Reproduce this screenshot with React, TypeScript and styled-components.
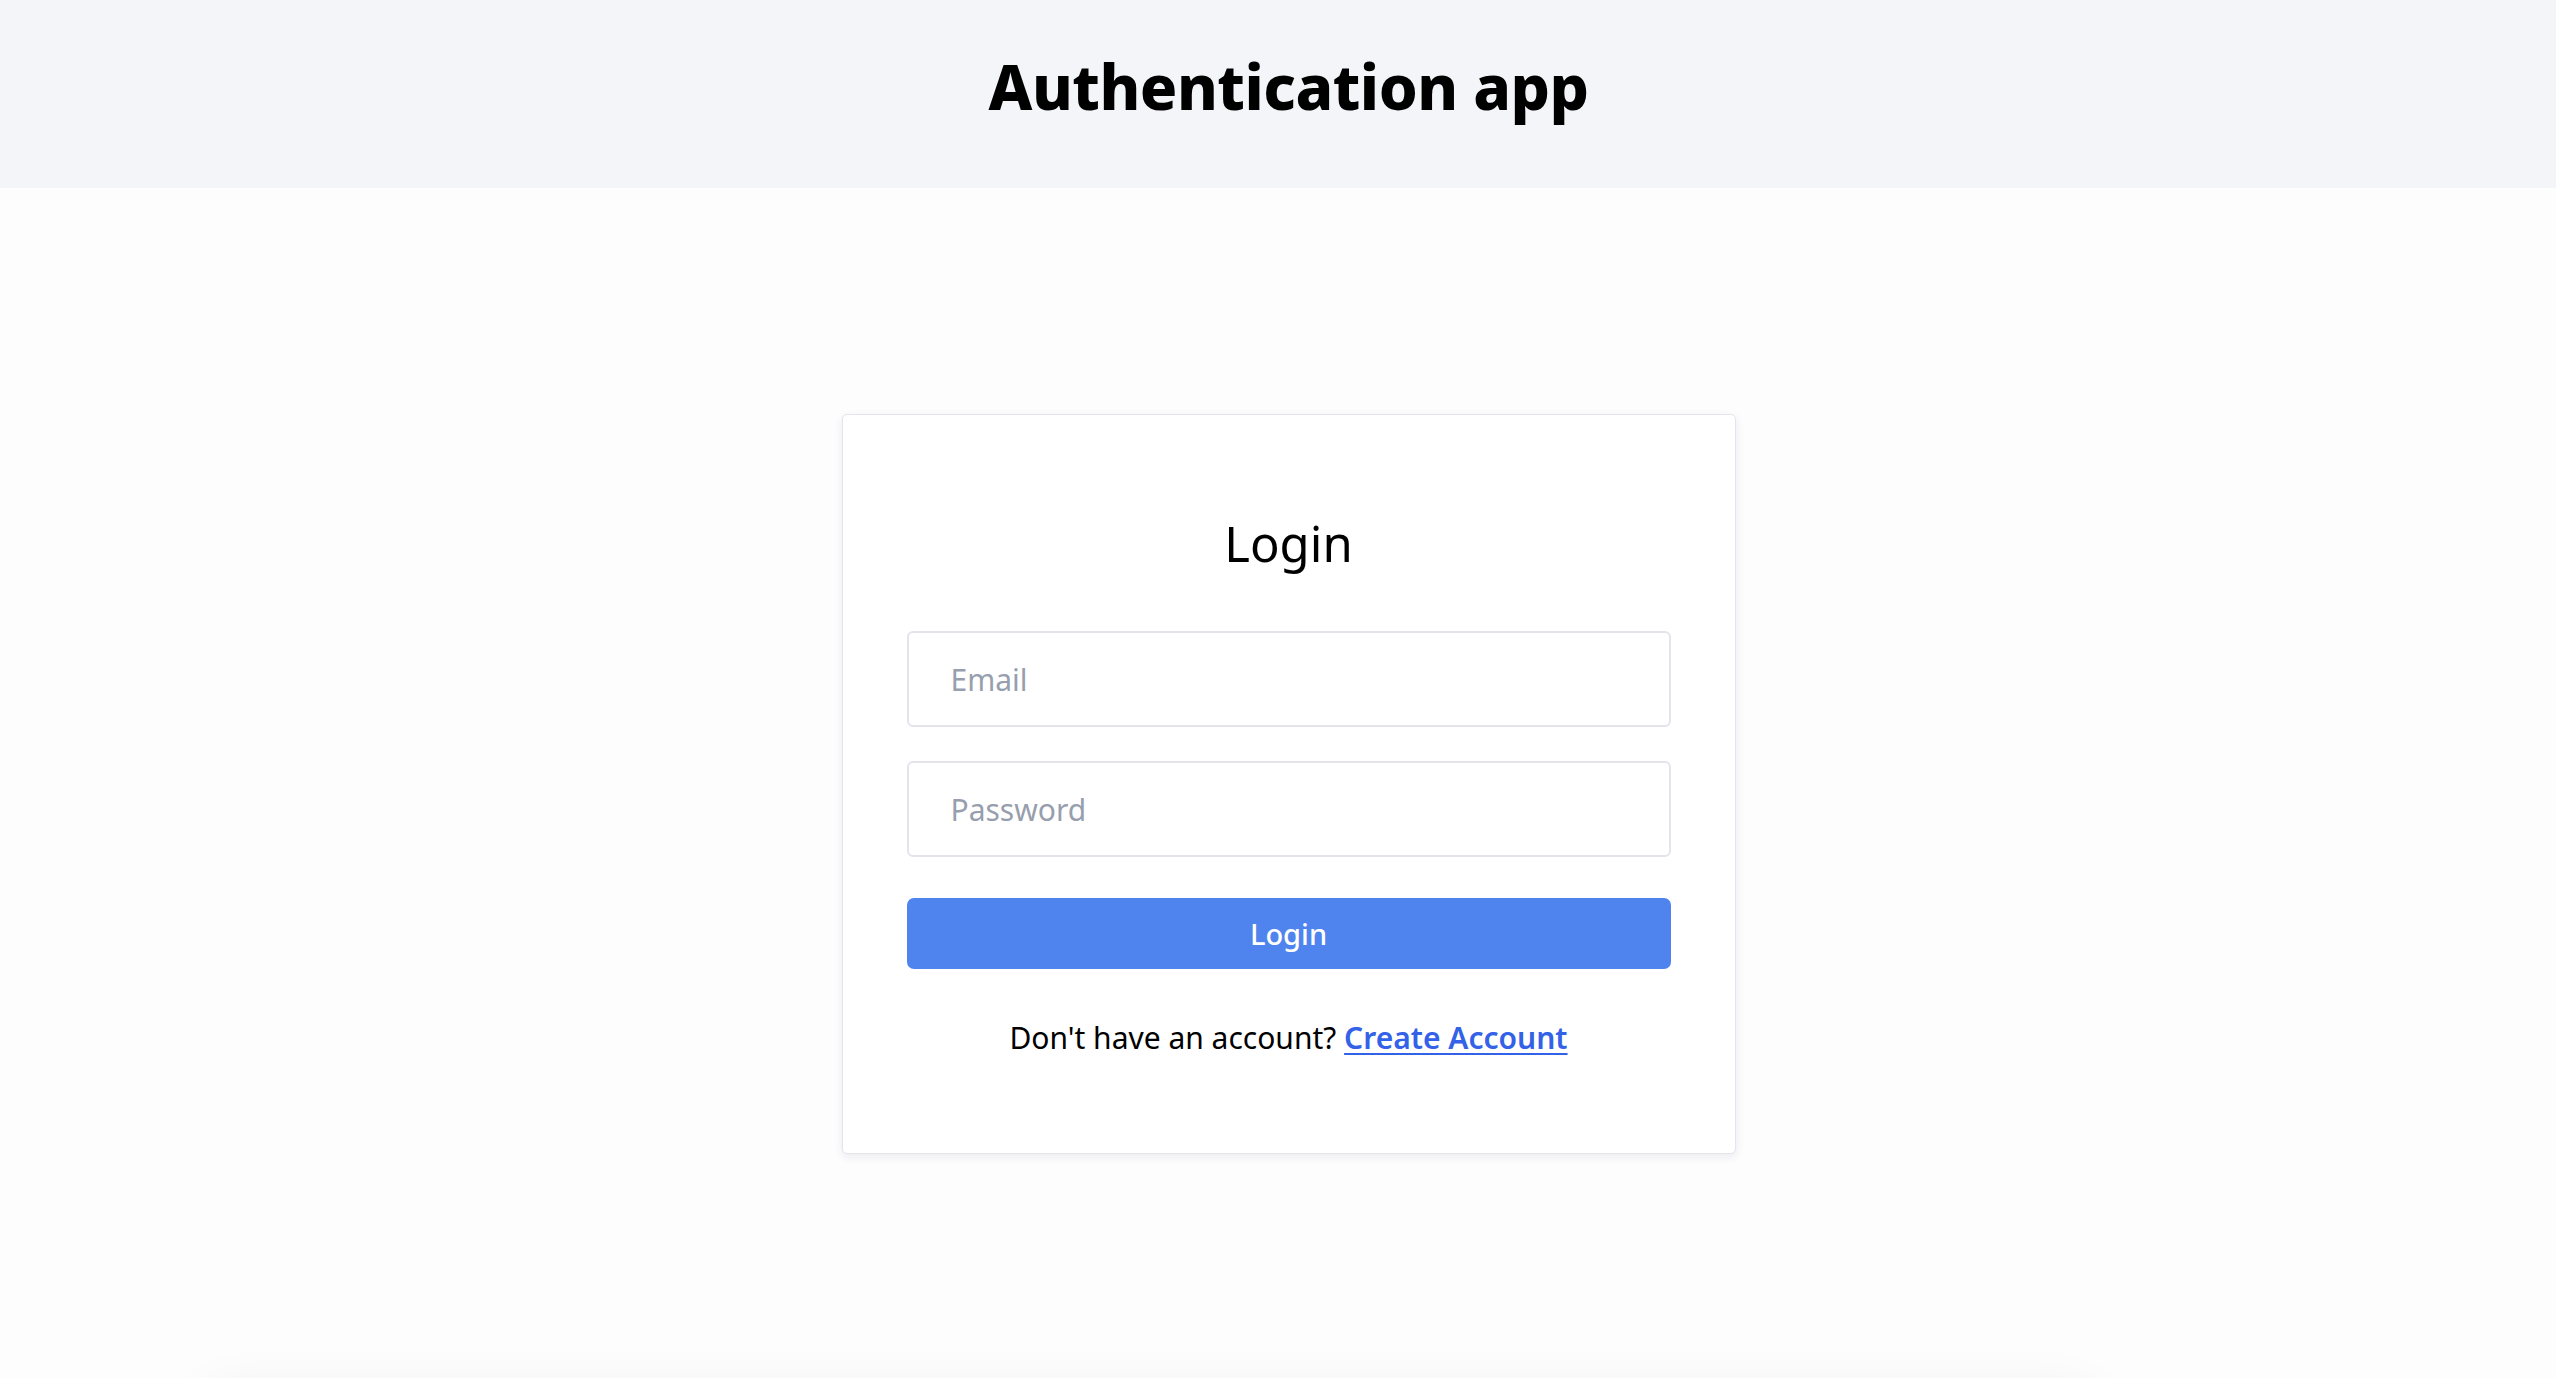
import React from "react";
import styled, { createGlobalStyle } from "styled-components";

const GlobalStyle = createGlobalStyle`
  html, body {
    margin: 0;
    padding: 0;
    background: #fdfdfe;
  }
  body {
    font-family: "Noto Sans", "Open Sans", sans-serif;
    color: #000;
    overflow: hidden;
  }
  * { box-sizing: border-box; }
`;

const Page = styled.div`
  display: flex;
  flex-direction: column;
  min-height: 100vh;
  background: #fdfdfe;
`;

const Header = styled.header`
  height: 188px;
  background: #f3f5f9;
  display: flex;
  align-items: center;
  justify-content: center;
  padding: 0 0 16px 21px;
`;

const Title = styled.h1`
  margin: 0;
  font-family: "Noto Sans", sans-serif;
  font-weight: 800;
  font-size: 62px;
  letter-spacing: -0.5px;
  color: #000;
`;

const Main = styled.main`
  display: flex;
  justify-content: center;
  padding: 226px 0 232px 21px;
`;

const Card = styled.section`
  width: 894px;
  background: #ffffff;
  border: 1px solid #e3e5ea;
  border-radius: 5px;
  box-shadow: 0 3px 10px rgba(20, 30, 60, 0.08);
  padding: 92px 64px 93px;
  display: flex;
  flex-direction: column;
  align-items: stretch;
`;

const Heading = styled.h2`
  margin: 0 0 52px;
  text-align: center;
  font-weight: 400;
  font-size: 49px;
  line-height: 72px;
  color: #000;
`;

const Form = styled.form`
  display: flex;
  flex-direction: column;
`;

const Input = styled.input<{ $gap?: number }>`
  height: 96px;
  width: 100%;
  margin-bottom: ${(p) => p.$gap ?? 0}px;
  border: 2px solid #e3e5ea;
  border-radius: 6px;
  background: #fff;
  padding: 0 42px;
  font-family: "Noto Sans", sans-serif;
  font-size: 30px;
  color: #111;
  outline: none;
  &::placeholder {
    color: #979ead;
  }
`;

const Button = styled.button`
  height: 71px;
  width: 100%;
  border: none;
  border-radius: 7px;
  background: #4f83ee;
  color: #fff;
  font-family: "Noto Sans", sans-serif;
  font-size: 29px;
  font-weight: 500;
  cursor: pointer;
`;

const Footer = styled.p`
  margin: 47px 0 0;
  text-align: center;
  font-size: 30px;
  line-height: 44px;
  color: #000;
`;

const Link = styled.a`
  color: #3362e8;
  font-weight: 600;
  text-decoration: underline;
  text-underline-offset: 4px;
  text-decoration-thickness: 2px;
`;

const Fold = styled.div`
  margin-left: 196px;
  width: 1908px;
  height: 200px;
  background: #fdfdfe;
  box-shadow: 0 0 50px rgba(20, 30, 60, 0.05);
  border-radius: 40px;
`;

export default function App() {
  return (
    <>
      <GlobalStyle />
      <Page>
        <Header>
          <Title>Authentication app</Title>
        </Header>
        <Main>
          <Card>
            <Heading>Login</Heading>
            <Form onSubmit={(e) => e.preventDefault()}>
              <Input type="email" placeholder="Email" $gap={34} />
              <Input type="password" placeholder="Password" $gap={41} />
              <Button type="submit">Login</Button>
            </Form>
            <Footer>
              Don't have an account? <Link href="#">Create Account</Link>
            </Footer>
          </Card>
        </Main>
        <Fold />
      </Page>
    </>
  );
}
